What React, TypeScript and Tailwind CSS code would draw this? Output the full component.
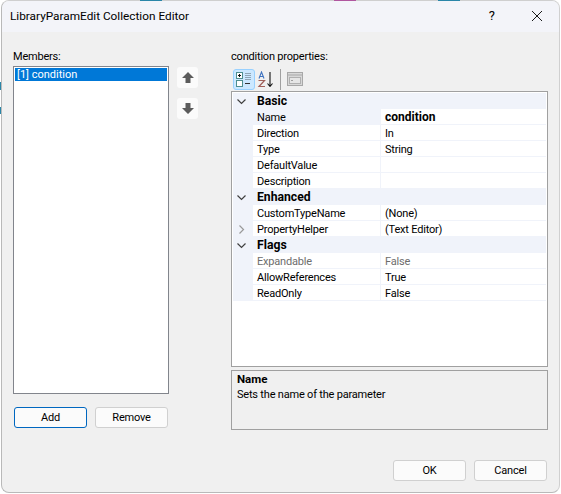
const font = "[font-family:Roboto,'Liberation_Sans',sans-serif]";

interface Row {
  name: string;
  value?: string;
  bold?: boolean;
  dim?: boolean;
  expand?: boolean;
}

interface Group {
  title: string;
  rows: Row[];
}

const groups: Group[] = [
  {
    title: "Basic",
    rows: [
      { name: "Name", value: "condition", bold: true },
      { name: "Direction", value: "In" },
      { name: "Type", value: "String" },
      { name: "DefaultValue", value: "" },
      { name: "Description", value: "" },
    ],
  },
  {
    title: "Enhanced",
    rows: [
      { name: "CustomTypeName", value: "(None)" },
      { name: "PropertyHelper", value: "(Text Editor)", expand: true },
    ],
  },
  {
    title: "Flags",
    rows: [
      { name: "Expandable", value: "False", dim: true },
      { name: "AllowReferences", value: "True" },
      { name: "ReadOnly", value: "False" },
    ],
  },
];

function Chevron({ right }: { right?: boolean }) {
  return (
    <svg width="9" height="9" viewBox="0 0 9 9" fill="none" stroke={right ? "#9a9a9a" : "#404040"} strokeWidth="1.2">
      {right ? <path d="M2.5 0.5 L6.5 4.5 L2.5 8.5" /> : <path d="M0.5 2.5 L4.5 6.5 L8.5 2.5" />}
    </svg>
  );
}

function Btn({ label, focus }: { label: string; focus?: boolean }) {
  return (
    <button
      className={`h-[21px] w-[73px] rounded-[3px] border bg-[#fbfbfb] text-[11px] leading-[18px] text-black ${
        focus ? "border-[#0067c0]" : "border-[#d0d0d0]"
      }`}
    >
      {label}
    </button>
  );
}

function MoveArrow({ down }: { down?: boolean }) {
  return (
    <svg width="12" height="11" viewBox="0 0 12 11" fill="#5c5c5c" className={down ? "rotate-180" : ""}>
      <path d="M6 0 L12 6 H8.5 V11 H3.5 V6 H0 Z" />
    </svg>
  );
}

function CategorizedIcon() {
  return (
    <svg width="16" height="16" viewBox="0 0 16 16">
      <rect x="0.5" y="1.5" width="6" height="6" fill="#fff" stroke="#4f8f8f" />
      <path d="M2 4.5h3M3.5 3v3M2 12.5h3M3.5 11v3" stroke="#111" />
      <rect x="0.5" y="9.5" width="6" height="6" fill="#fff" stroke="#4f8f8f" />
      <path d="M9 2.5h6M9 4.5h6M9 6.5h6M9 8.5h6" stroke="#8fa5b5" />
      <path d="M9 12.5h5" stroke="#333" />
    </svg>
  );
}

function AlphaIcon() {
  return (
    <svg width="18" height="17" viewBox="0 0 18 17">
      <path d="M2 7.5 L4.5 1 L7 7.5 M3 5.5h3" fill="none" stroke="#3f73c0" strokeWidth="1.1" />
      <path d="M1.5 9.5h6L2 15.5h6" fill="none" stroke="#a0605a" strokeWidth="1.2" />
      <path d="M13 1v14M10.5 12.5 L13 15.5 L15.5 12.5" fill="none" stroke="#111" strokeWidth="1.1" />
    </svg>
  );
}

function PagesIcon() {
  return (
    <svg width="16" height="14" viewBox="0 0 16 14">
      <rect x="0.5" y="0.5" width="15" height="13" fill="#d8d8d8" stroke="#a8a8a8" />
      <path d="M1 3h14" stroke="#a8a8a8" />
      <rect x="2.5" y="5.5" width="11" height="6" fill="#e6e6e6" stroke="#b0b0b0" />
      <path d="M4 8.5h2" stroke="#a0a0a0" />
    </svg>
  );
}

export default function App() {
  return (
    <div className={`relative h-[494px] w-[561px] overflow-hidden bg-white pb-px pl-px pr-px text-[11px] tracking-[-0.2px] text-black ${font}`}>
      {/* slivers of the desktop showing behind the dialog */}
      <div className="absolute left-[140px] top-0 h-px w-[22px] bg-[#2a86a8]" />
      <div className="absolute left-[334px] top-0 h-px w-[22px] bg-[#b0569f]" />
      <div className="absolute left-[438px] top-0 h-px w-[22px] bg-[#2a86a8]" />
      <div className="absolute left-0 top-[82px] h-[8px] w-px bg-[#2a86a8]" />
      <div className="absolute left-0 top-[107px] h-[7px] w-px bg-[#2a86a8]" />

      <div className="flex h-full flex-col overflow-hidden rounded-lg border border-[#b9b9b9] border-r-[#d0d0d0] border-t-[#cfcfcf] bg-[#f0f0f0]">
        <div className="flex h-[31px] shrink-0 items-center bg-[#f3f4f9] pb-[2px] pl-2 tracking-normal">
          <span className="flex-1 text-[11.8px] leading-4">LibraryParamEdit Collection Editor</span>
          <span className="mr-[37px] text-[13px] leading-4">?</span>
          <svg className="mr-[17px]" width="10" height="10" viewBox="0 0 10 10" stroke="#1a1a1a" strokeWidth="1">
            <path d="M0 0 L10 10 M10 0 L0 10" />
          </svg>
        </div>

        <div className="flex flex-1 flex-col px-[11px] pt-[17px]">
          <div className="flex">
            <div className="flex w-[156px] flex-col">
              <div className="h-[17px] leading-4">Members:</div>
              <div className="h-[328px] border border-[#82858c] bg-white p-px">
                <div className="flex h-[13px] items-center bg-[#0078d7] pl-[2px] leading-[13px] tracking-normal text-white">[1] condition</div>
              </div>
              <div className="mt-[13px] flex gap-2 pl-px">
                <Btn label="Add" focus />
                <Btn label="Remove" />
              </div>
            </div>

            <div className="ml-2 flex w-[21px] flex-col gap-[10px] pt-[18px]">
              <div className="flex h-[21px] items-center justify-center rounded-[3px] bg-[#fbfbfb]">
                <MoveArrow />
              </div>
              <div className="flex h-[21px] items-center justify-center rounded-[3px] bg-[#fbfbfb]">
                <MoveArrow down />
              </div>
            </div>

            <div className="ml-[33px] flex w-[317px] flex-col">
              <div className="h-[19px] leading-4">condition properties:</div>
              <div className="flex h-[22px] items-center pl-[2px]">
                <div className="flex h-[21px] w-[22px] items-center justify-center rounded-[3px] border border-[#99d1ff] bg-[#cce8ff]">
                  <CategorizedIcon />
                </div>
                <div className="ml-[2px] flex w-[18px] justify-center">
                  <AlphaIcon />
                </div>
                <div className="ml-[5px] h-[21px] w-px bg-[#a0a0a0]" />
                <div className="ml-[6px]">
                  <PagesIcon />
                </div>
              </div>
              <div className="mt-px h-[276px] border border-[#a0a0a0] bg-white p-px">
                {groups.map((g) => (
                  <div key={g.title}>
                    <div className="flex h-4 items-center bg-[#f0f3fa]">
                      <span className="flex w-[20px] justify-center pr-[3px]">
                        <Chevron />
                      </span>
                      <span className="pl-1 text-[12.2px] font-bold leading-4 tracking-normal">{g.title}</span>
                    </div>
                    {g.rows.map((r) => (
                      <div key={r.name} className="flex h-4">
                        <span className="flex w-[20px] items-center justify-center bg-[#f0f3fa] pr-[3px]">
                          {r.expand && <Chevron right />}
                        </span>
                        <span
                          className={`w-[128px] border-b border-r border-[#f0f3fa] pl-1 pt-[2px] leading-[13px] ${r.dim ? "text-[#6d6d6d]" : ""} ${r.bold ? "bg-[#f0f3fa]" : ""}`}
                        >
                          {r.name}
                        </span>
                        <span
                          className={`flex-1 border-b border-[#f0f3fa] pl-1 pt-[2px] leading-[13px] ${r.bold ? "text-[12px] font-bold tracking-normal" : ""} ${r.dim ? "text-[#6d6d6d]" : ""}`}
                        >
                          {r.value}
                        </span>
                      </div>
                    ))}
                  </div>
                ))}
              </div>
              <div className="mt-[3px] h-[60px] border border-[#a0a0a0] bg-[#f0f0f0] px-[5px] pt-px leading-[15px]">
                <div className="text-[11.5px] font-bold tracking-normal">Name</div>
                <div>Sets the name of the parameter</div>
              </div>
            </div>
          </div>

          <div className="mt-[30px] flex justify-end gap-2 pr-px">
            <Btn label="OK" />
            <Btn label="Cancel" />
          </div>
        </div>
      </div>
    </div>
  );
}
